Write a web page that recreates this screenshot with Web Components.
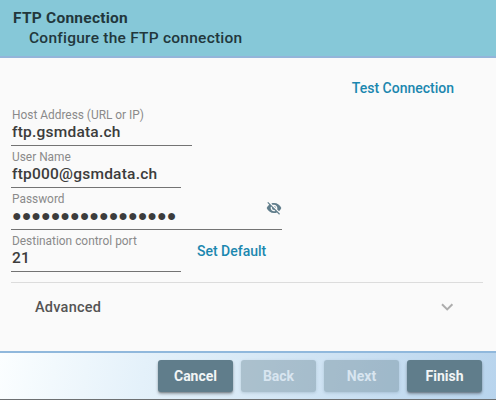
<!DOCTYPE html>
<html lang="en">
<head>
<meta charset="utf-8">
<title>FTP Connection</title>
<style>
html,body{margin:0;height:100%}
body{font-family:Roboto,"Liberation Sans",sans-serif;overflow:hidden;background:#fafafa}
</style>
</head>
<body>
<ftp-wizard></ftp-wizard>
<script>
function define(name, html) {
  const t = document.createElement('template');
  t.innerHTML = html;
  customElements.define(name, class extends HTMLElement {
    constructor() {
      super();
      this.attachShadow({mode: 'open'}).appendChild(t.content.cloneNode(true));
    }
  });
}

define('wizard-header', `
<style>
:host{display:block;box-sizing:border-box;height:58px;padding:8px 13px 0;background:#86c8d8;border-bottom:2px solid #93b5da;color:#22373c;font-size:15.5px;letter-spacing:.24px;line-height:20px}
.title{font-weight:700}
.sub{font-weight:500;padding-left:16px}
</style>
<div class="title"><slot name="title"></slot></div>
<div class="sub"><slot></slot></div>`);

define('text-field', `
<style>
:host{display:flex;box-sizing:border-box;flex-direction:column;height:42px;width:var(--w,170px);padding:4px 1px 0;border-bottom:1px solid #737373}
.label{font-size:11.9px;line-height:14px;color:#8a8a8a;white-space:nowrap}
.row{display:flex;justify-content:space-between;align-items:center;height:20px;font-size:15.5px;letter-spacing:.22px;font-weight:500;line-height:20px;color:#3c3c3c;white-space:nowrap}
</style>
<div class="label"><slot name="label"></slot></div>
<div class="row"><slot></slot><slot name="icon"></slot></div>`);

define('visibility-off', `
<style>:host{display:block;width:16px;height:16px;margin:-17px -1px 0 0}svg{display:block}</style>
<svg width="16" height="16" viewBox="0 0 24 24" fill="#607d8b"><path d="M12 7c2.76 0 5 2.24 5 5 0 .65-.13 1.26-.36 1.83l2.92 2.92c1.51-1.26 2.7-2.89 3.43-4.75-1.73-4.39-6-7.5-11-7.5-1.4 0-2.74.25-3.98.7l2.16 2.16C10.74 7.13 11.35 7 12 7zM2 4.27l2.28 2.28.46.46C3.08 8.3 1.78 10.02 1 12c1.73 4.39 6 7.5 11 7.5 1.55 0 3.03-.3 4.38-.84l.42.42L19.73 22 21 20.73 3.27 3 2 4.27zM7.53 9.8l1.55 1.55c-.05.21-.08.43-.08.65 0 1.66 1.34 3 3 3 .22 0 .44-.03.65-.08l1.55 1.55c-.67.33-1.41.53-2.2.53-2.76 0-5-2.24-5-5 0-.79.2-1.53.53-2.2zm4.31-.78l3.15 3.15.02-.16c0-1.66-1.34-3-3-3l-.17.01z"/></svg>`);

define('link-button', `
<style>:host{display:block;font-size:14px;font-weight:500;line-height:20px;color:#1b87af;white-space:nowrap}</style><slot></slot>`);

define('expansion-row', `
<style>
:host{display:flex;align-items:center;justify-content:space-between;box-sizing:border-box;height:49px;width:472px;padding:0 29px 0 24px;border-top:1px solid #dcdcdc;font-size:14.5px;letter-spacing:.25px;font-weight:500;color:#545454}
svg{display:block}
</style>
<slot></slot>
<svg width="14" height="10" viewBox="0 0 14 10" fill="none" stroke="#adadad" stroke-width="2"><path d="M2 2.2 7.2 7.4 12.4 2.2"/></svg>`);

define('wizard-button', `
<style>
:host{display:flex;align-items:center;justify-content:center;width:75px;height:32px;border-radius:3px;background:#607d8b;color:#f2f5f6;font-size:14px;font-weight:700;box-shadow:0 2px 3px rgba(0,0,0,.32),0 1px 1px rgba(0,0,0,.15)}
:host([disabled]){background:rgba(96,125,139,.38);color:#d8e5f0;box-shadow:0 1px 3px rgba(60,90,110,.22)}
</style><slot></slot>`);

define('wizard-footer', `
<style>
:host{display:flex;box-sizing:border-box;gap:8px;justify-content:flex-end;height:49px;padding:7px 14px 0;border-top:2px solid #90b8dc;border-bottom:1px solid #6d7072;background:linear-gradient(100deg,#fbfeff 0,#e4f1fa 29%,#d8e9f6 50%,#b8d4ed 100%)}
</style><slot></slot>`);

define('ftp-wizard', `
<style>
:host{display:flex;flex-direction:column;height:400px;width:496px;background:#fafafa}
main{flex:1;display:flex;flex-direction:column;padding-left:11px}
.top{display:flex;justify-content:flex-end;height:46px;padding:20px 42px 0 0;box-sizing:border-box}
.port{display:flex;gap:16px}
.port link-button{padding-top:11px}
.gap{height:10px}
.dots{font-size:16px;letter-spacing:0}
</style>
<wizard-header><span slot="title">FTP Connection</span>Configure the FTP connection</wizard-header>
<main>
<div class="top"><link-button>Test Connection</link-button></div>
<text-field style="--w:181px"><span slot="label">Host Address (URL or IP)</span><span>ftp.gsmdata.ch</span></text-field>
<text-field><span slot="label">User Name</span><span>ftp000@gsmdata.ch</span></text-field>
<text-field style="--w:271px"><span slot="label">Password</span><span class="dots">●●●●●●●●●●●●●●●●●</span><visibility-off slot="icon"></visibility-off></text-field>
<div class="port"><text-field><span slot="label">Destination control port</span><span>21</span></text-field><link-button>Set Default</link-button></div>
<div class="gap"></div>
<expansion-row>Advanced</expansion-row>
</main>
<wizard-footer><wizard-button>Cancel</wizard-button><wizard-button disabled>Back</wizard-button><wizard-button disabled>Next</wizard-button><wizard-button>Finish</wizard-button></wizard-footer>`);
</script>
</body>
</html>
